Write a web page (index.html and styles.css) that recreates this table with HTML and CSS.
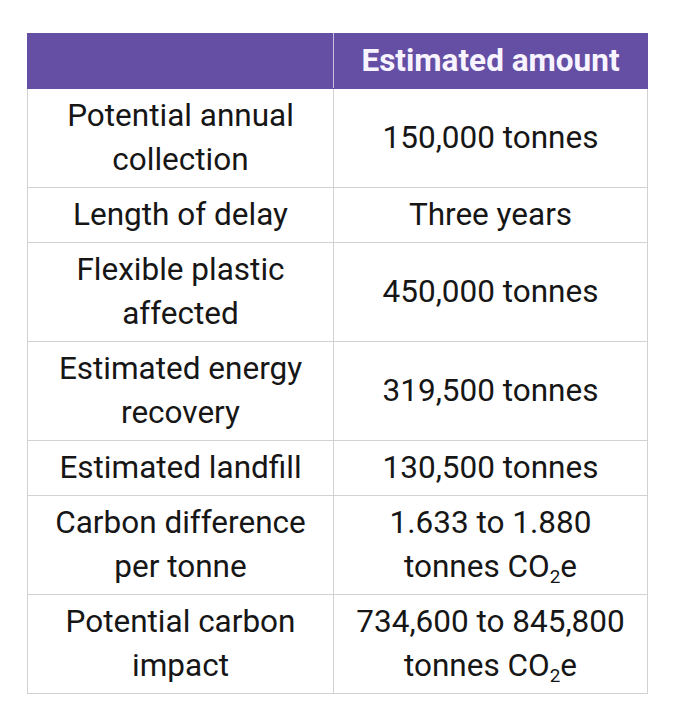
FILE: index.html
```html
<!DOCTYPE html>
<html>
<head>
<meta charset="utf-8">
<link rel="stylesheet" href="styles.css">
</head>
<body>
<table class="data">
  <thead>
    <tr><th class="c1"></th><th class="c2">Estimated amount</th></tr>
  </thead>
  <tbody>
    <tr><td>Potential annual collection</td><td>150,000 tonnes</td></tr>
    <tr><td>Length of delay</td><td>Three years</td></tr>
    <tr><td>Flexible plastic affected</td><td>450,000 tonnes</td></tr>
    <tr><td>Estimated energy recovery</td><td>319,500 tonnes</td></tr>
    <tr><td>Estimated landfill</td><td>130,500 tonnes</td></tr>
    <tr><td>Carbon difference per tonne</td><td>1.633 to 1.880 tonnes CO<sub>2</sub>e</td></tr>
    <tr><td>Potential carbon impact</td><td>734,600 to 845,800 tonnes CO<sub>2</sub>e</td></tr>
  </tbody>
</table>
</body>
</html>
```
FILE: styles.css
```css
html, body {
  margin: 0;
  padding: 0;
  background: #ffffff;
}
body {
  padding: 33px 0 0 27px;
  font-family: Roboto, "Liberation Sans", sans-serif;
  color: #161616;
}
.data {
  border-collapse: collapse;
  width: 621px;
  table-layout: fixed;
  font-size: 31.5px;
  line-height: 44px;
}
.data th, .data td {
  border: 1px solid #d2d2d2;
  text-align: center;
  vertical-align: middle;
  padding: 5px 10px;
}
.data th {
  background: #654fa5;
  color: #f8f4ff;
  font-weight: 700;
  border-color: #654fa5;
  height: 44px;
}
.data th.c1 {
  width: 285px;
  border-right: 1px solid #c9c0e4;
}
.data sub {
  font-size: 0.6em;
  line-height: 0;
  vertical-align: -0.3em;
}
```
